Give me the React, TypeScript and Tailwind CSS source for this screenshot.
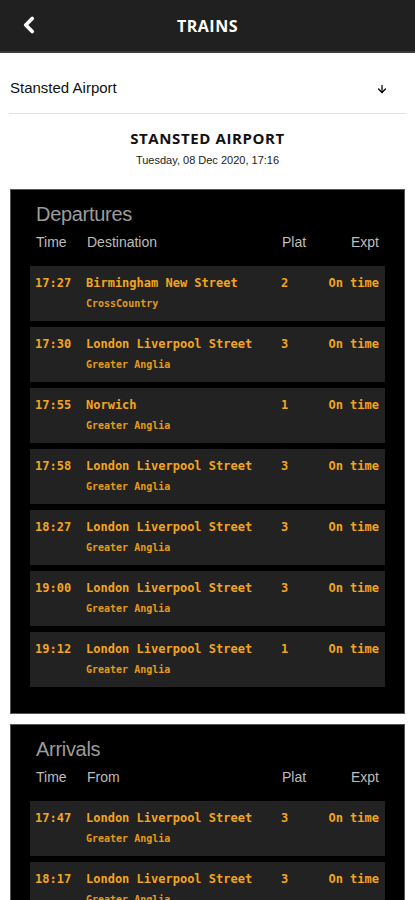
import { ArrowDown, ChevronLeft } from "lucide-react";

type Service = {
  time: string;
  place: string;
  operator: string;
  plat: string;
  expt: string;
};

const departures: Service[] = [
  { time: "17:27", place: "Birmingham New Street", operator: "CrossCountry", plat: "2", expt: "On time" },
  { time: "17:30", place: "London Liverpool Street", operator: "Greater Anglia", plat: "3", expt: "On time" },
  { time: "17:55", place: "Norwich", operator: "Greater Anglia", plat: "1", expt: "On time" },
  { time: "17:58", place: "London Liverpool Street", operator: "Greater Anglia", plat: "3", expt: "On time" },
  { time: "18:27", place: "London Liverpool Street", operator: "Greater Anglia", plat: "3", expt: "On time" },
  { time: "19:00", place: "London Liverpool Street", operator: "Greater Anglia", plat: "3", expt: "On time" },
  { time: "19:12", place: "London Liverpool Street", operator: "Greater Anglia", plat: "1", expt: "On time" },
];

const arrivals: Service[] = [
  { time: "17:47", place: "London Liverpool Street", operator: "Greater Anglia", plat: "3", expt: "On time" },
  { time: "18:17", place: "London Liverpool Street", operator: "Greater Anglia", plat: "3", expt: "On time" },
];

function Board({ title, placeLabel, rows }: { title: string; placeLabel: string; rows: Service[] }) {
  return (
    <div className="mx-[10px] bg-black border border-[#555] pt-[12px] pb-[26px] pl-[19px] pr-[19px]">
      <h2 className="pl-[6px] text-[20px] leading-[24px] text-[#9c9c9c] tracking-[-0.3px]">{title}</h2>
      <div className="flex items-center h-[40px] pb-[8px] px-[6px] text-[14px] text-[#bdbdbd]">
        <span className="w-[51px]">Time</span>
        <span className="w-[195px]">{placeLabel}</span>
        <span className="flex-1">Plat</span>
        <span>Expt</span>
      </div>
      <div className="flex flex-col gap-[6px]">
        {rows.map((r, i) => (
          <div
            key={i}
            className="bg-[#222222] h-[55px] pl-[5px] pr-[6px] pt-[9px] text-[#f2a51f] font-bold"
            style={{ fontFamily: '"DejaVu Sans Mono", "Liberation Mono", monospace' }}
          >
            <div className="flex items-center text-[12px] leading-[16px]">
              <span className="w-[51px]">{r.time}</span>
              <span className="w-[195px] whitespace-nowrap">{r.place}</span>
              <span className="flex-1">{r.plat}</span>
              <span>{r.expt}</span>
            </div>
            <div className="pl-[51px] mt-[7px] text-[10px] leading-[12px] text-[#e39a1c]">{r.operator}</div>
          </div>
        ))}
      </div>
    </div>
  );
}

export default function App() {
  return (
    <div className="w-[415px] h-[900px] overflow-hidden bg-white" style={{ fontFamily: '"Liberation Sans", Arial, sans-serif' }}>
      <header className="relative h-[53px] bg-[#202020] border-b-2 border-[#3a3a3a] flex items-center justify-center">
        <ChevronLeft className="absolute left-[16px] top-[12px] text-white" size={26} strokeWidth={3.5} />
        <h1 className="text-white font-bold text-[16px] tracking-[0.5px]" style={{ fontFamily: '"Open Sans", sans-serif' }}>TRAINS</h1>
      </header>

      <div className="mx-[9px] h-[61px] pt-[10px] flex items-center justify-between border-b border-[#e2e2e2]">
        <span className="text-[15px] text-[#111] pl-[1px]">Stansted Airport</span>
        <ArrowDown className="text-black mr-[18px] mt-[2px]" size={12} strokeWidth={2.5} />
      </div>

      <div className="flex flex-col items-center pt-[14px] pb-[22px]">
        <h2 className="font-bold text-[15px] leading-[20px] tracking-[0.6px] text-[#111]" style={{ fontFamily: '"Open Sans", sans-serif' }}>
          STANSTED AIRPORT
        </h2>
        <p className="text-[11px] leading-[14px] mt-[5px] text-[#222]">Tuesday, 08 Dec 2020, 17:16</p>
      </div>

      <Board title="Departures" placeLabel="Destination" rows={departures} />
      <div className="h-[10px]" />
      <Board title="Arrivals" placeLabel="From" rows={arrivals} />
    </div>
  );
}
